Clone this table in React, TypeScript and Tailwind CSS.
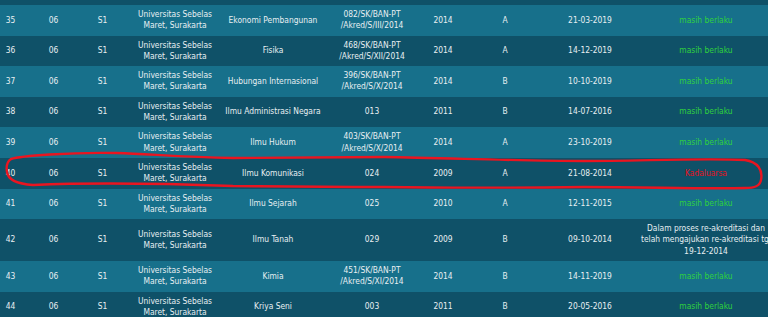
import React from "react";

type Row = {
  no: string;
  prog: string;
  sk: string[];
  year: string;
  grade: string;
  date: string;
  status: string[];
  tone: "ok" | "bad" | "plain";
};

const rows: Row[] = [
  { no: "35", prog: "Ekonomi Pembangunan", sk: ["082/SK/BAN-PT", "/Akred/S/III/2014"], year: "2014", grade: "A", date: "21-03-2019", status: ["masih berlaku"], tone: "ok" },
  { no: "36", prog: "Fisika", sk: ["468/SK/BAN-PT", "/Akred/S/XII/2014"], year: "2014", grade: "A", date: "14-12-2019", status: ["masih berlaku"], tone: "ok" },
  { no: "37", prog: "Hubungan Internasional", sk: ["396/SK/BAN-PT", "/Akred/S/X/2014"], year: "2014", grade: "B", date: "10-10-2019", status: ["masih berlaku"], tone: "ok" },
  { no: "38", prog: "Ilmu Administrasi Negara", sk: ["013"], year: "2011", grade: "B", date: "14-07-2016", status: ["masih berlaku"], tone: "ok" },
  { no: "39", prog: "Ilmu Hukum", sk: ["403/SK/BAN-PT", "/Akred/S/X/2014"], year: "2014", grade: "A", date: "23-10-2019", status: ["masih berlaku"], tone: "ok" },
  { no: "40", prog: "Ilmu Komunikasi", sk: ["024"], year: "2009", grade: "A", date: "21-08-2014", status: ["Kadaluarsa"], tone: "bad" },
  { no: "41", prog: "Ilmu Sejarah", sk: ["025"], year: "2010", grade: "A", date: "12-11-2015", status: ["masih berlaku"], tone: "ok" },
  { no: "42", prog: "Ilmu Tanah", sk: ["029"], year: "2009", grade: "B", date: "09-10-2014", status: ["Dalam proses re-akreditasi dan", "telah mengajukan re-akreditasi tgl", "19-12-2014"], tone: "plain" },
  { no: "43", prog: "Kimia", sk: ["451/SK/BAN-PT", "/Akred/S/XI/2014"], year: "2014", grade: "B", date: "14-11-2019", status: ["masih berlaku"], tone: "ok" },
  { no: "44", prog: "Kriya Seni", sk: ["003"], year: "2011", grade: "B", date: "20-05-2016", status: ["masih berlaku"], tone: "ok" },
];

function Lines({ items }: { items: string[] }) {
  return (
    <>
      {items.map((t, i) => (
        <React.Fragment key={i}>
          {i > 0 && <br />}
          {t}
        </React.Fragment>
      ))}
    </>
  );
}

export default function App() {
  return (
    <div className="relative w-[768px] h-[317px] overflow-hidden bg-[#0f5168] text-[#e8eff2] text-[8.4px] leading-[11.3px] font-[family-name:'DejaVu_Sans_Condensed','Liberation_Sans',sans-serif]">
      <div className="h-[5px] bg-[#0f5168]" />
      <table className="table-fixed border-collapse w-[785px] -ml-[11px]">
        <colgroup>
          <col className="w-[43px]" />
          <col className="w-[43px]" />
          <col className="w-[55px]" />
          <col className="w-[90px]" />
          <col className="w-[106px]" />
          <col className="w-[92px]" />
          <col className="w-[50px]" />
          <col className="w-[74px]" />
          <col className="w-[96px]" />
          <col className="w-[136px]" />
        </colgroup>
        <tbody>
          {rows.map((r, i) => (
            <tr key={r.no} className={i % 2 === 0 ? "bg-[#17708b]" : "bg-[#0f5168]"}>
              <td className="py-1 px-0 text-center align-middle whitespace-nowrap">{r.no}</td>
              <td className="py-1 px-0 text-center align-middle whitespace-nowrap">06</td>
              <td className="py-1 px-0 text-center align-middle whitespace-nowrap">S1</td>
              <td className="py-1 px-0 text-center align-middle whitespace-nowrap">
                Universitas Sebelas
                <br />
                Maret, Surakarta
              </td>
              <td className="py-1 px-0 text-center align-middle whitespace-nowrap">{r.prog}</td>
              <td className="py-1 px-0 text-center align-middle whitespace-nowrap">
                <Lines items={r.sk} />
              </td>
              <td className="py-1 px-0 text-center align-middle whitespace-nowrap">{r.year}</td>
              <td className="py-1 px-0 text-center align-middle whitespace-nowrap">{r.grade}</td>
              <td className="py-1 px-0 text-center align-middle whitespace-nowrap">{r.date}</td>
              <td
                className={
                  "py-1 px-0 text-center align-middle whitespace-nowrap " +
                  (r.tone === "ok" ? "text-[#2fd23c]" : r.tone === "bad" ? "text-[#e5101c]" : "text-[#e8eff2]")
                }
              >
                <Lines items={r.status} />
              </td>
            </tr>
          ))}
        </tbody>
      </table>
      <svg
        className="absolute inset-0 pointer-events-none"
        width="768"
        height="317"
        viewBox="0 0 768 317"
        fill="none"
      >
        <path
          d="M 11 159 C 20 156, 70 152, 117 153 C 150 154, 180 157, 233 158 C 300 158, 350 157, 384 157 C 450 158, 520 161, 584 161 C 640 161, 700 158, 745 160 C 758 162, 763 170, 761 180 C 760 186, 755 188, 745 188 C 700 189, 650 187, 584 187 C 500 188, 450 188, 384 187 C 300 187, 250 186, 233 186 C 150 183, 80 183, 33 185 C 18 184, 8 180, 7 172 C 6 166, 8 161, 11 159"
          stroke="#ea1520"
          strokeWidth="2.4"
          strokeLinecap="round"
          strokeLinejoin="round"
        />
      </svg>
    </div>
  );
}
